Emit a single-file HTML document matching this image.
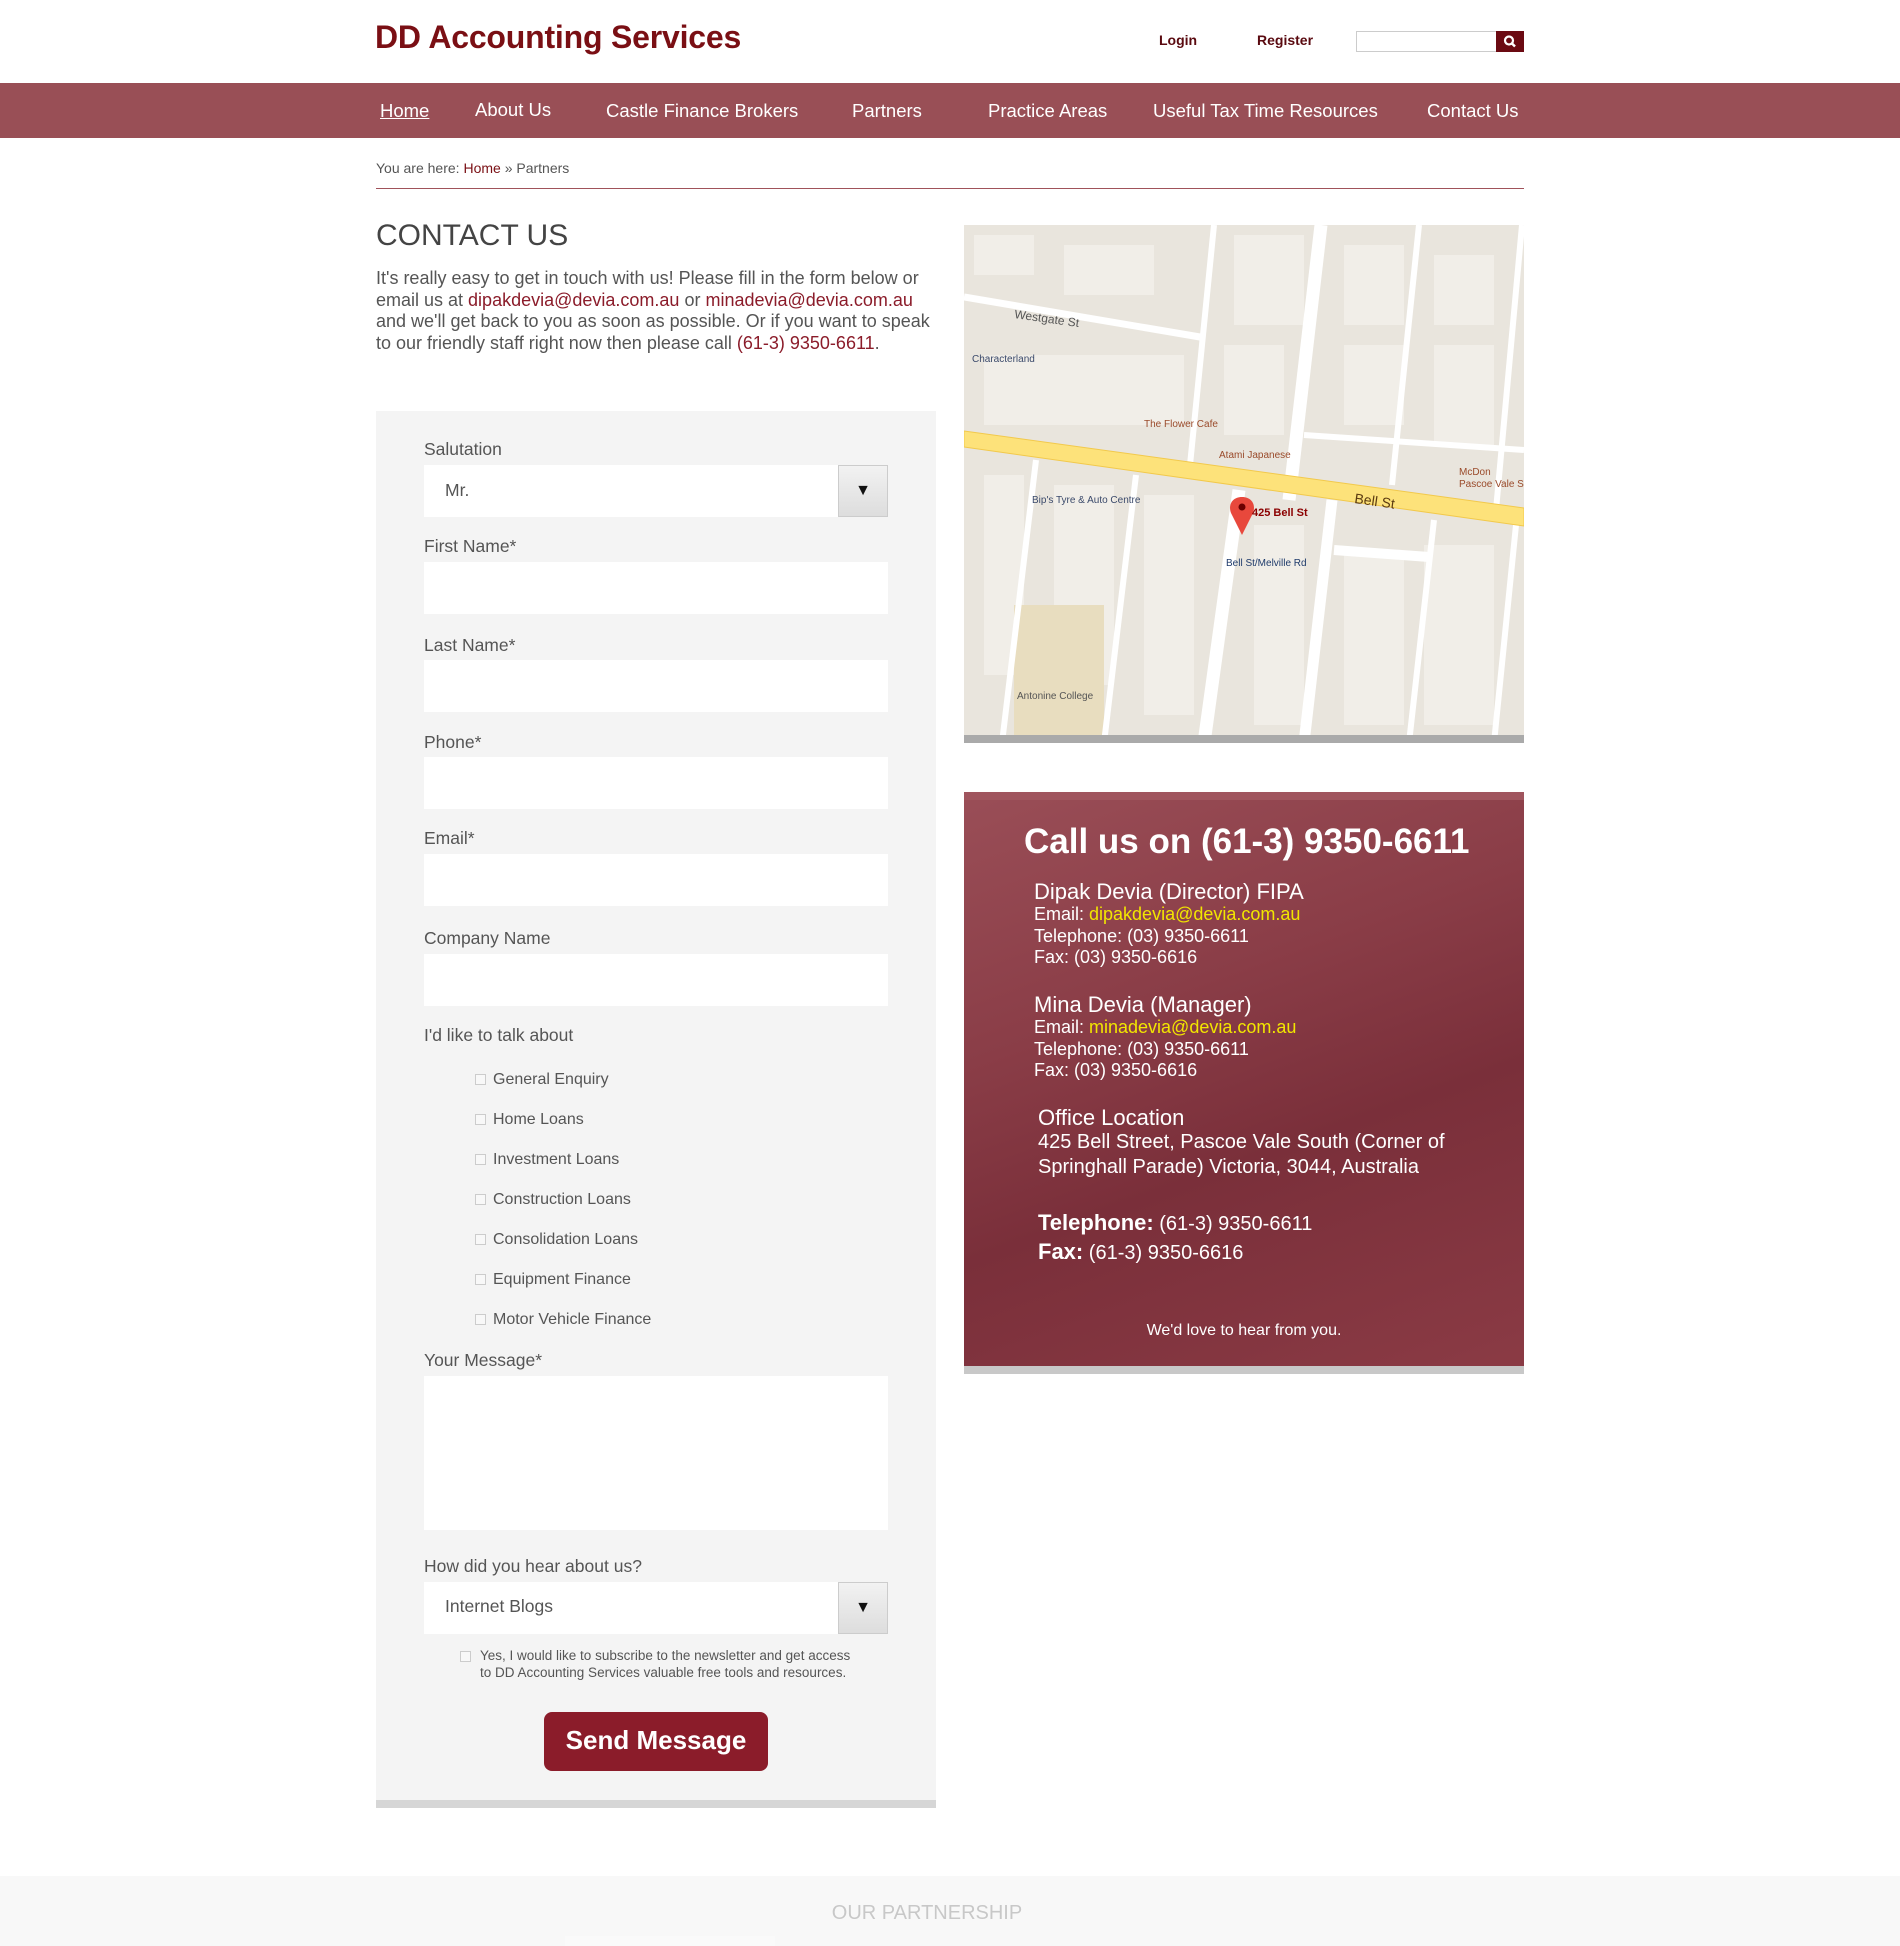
<!DOCTYPE html>
<html><head><meta charset="utf-8"><style>
*{margin:0;padding:0;box-sizing:border-box}
body{width:1900px;height:1946px;position:relative;background:#fff;font-family:"Liberation Sans",sans-serif;color:#555;overflow:hidden}
.a{position:absolute;white-space:nowrap}
.nav span{position:absolute;top:98px;font-size:18.5px;color:#fff;line-height:24px}
.lbl{position:absolute;left:424px;font-size:17.5px;color:#555;line-height:22px}
.inp{position:absolute;left:424px;width:464px;height:52px;background:#fff}
.sel .btn{position:absolute;right:0;top:0;width:50px;height:52px;background:linear-gradient(#f2f2f2,#ddd);border:1px solid #ccc;text-align:center;line-height:50px;font-size:16px;color:#111}
.cb{position:absolute;left:475px;width:11px;height:11px;border:1px solid #ccc;background:#f8f8f8}
.ct{position:absolute;left:493px;font-size:16px;color:#555;line-height:20px}
.w{color:#fff;position:absolute;white-space:nowrap}
.y{color:#f2e600}
</style></head><body>
<div class="a" style="left:375px;top:19px;font-size:32px;font-weight:bold;color:#7a0f14;letter-spacing:-0.2px">DD Accounting Services</div>
<div class="a" style="left:1159px;top:32px;font-size:14px;font-weight:bold;color:#5a0a10">Login</div>
<div class="a" style="left:1257px;top:32px;font-size:14px;font-weight:bold;color:#5a0a10">Register</div>
<div class="a" style="left:1356px;top:31px;width:141px;height:21px;border:1px solid #ccc;background:#fff"></div>
<div class="a" style="left:1496px;top:31px;width:28px;height:21px;background:#6b0a12"><svg width="28" height="21"><circle cx="13" cy="9.5" r="4" stroke="#fff" stroke-width="2.2" fill="none"/><line x1="16" y1="12.5" x2="19" y2="15.5" stroke="#fff" stroke-width="2.5"/></svg></div>

<div class="a nav" style="left:0;top:83px;width:1900px;height:55px;background:#994f56">
<span style="left:380px;top:16px;text-decoration:underline">Home</span>
<span style="left:475px;top:15px">About Us</span>
<span style="left:606px;top:16px">Castle Finance Brokers</span>
<span style="left:852px;top:16px">Partners</span>
<span style="left:988px;top:16px">Practice Areas</span>
<span style="left:1153px;top:16px">Useful Tax Time Resources</span>
<span style="left:1427px;top:16px">Contact Us</span>
</div>
<div class="a" style="left:376px;top:160px;font-size:14px;color:#555">You are here: <span style="color:#7a0f14">Home</span> » Partners</div>
<div class="a" style="left:376px;top:188px;width:1148px;height:1px;background:#a0525a"></div>

<div class="a" style="left:376px;top:219px;font-size:30px;color:#444">CONTACT US</div>
<div class="a" style="left:376px;top:268px;font-size:18px;line-height:21.7px;color:#555">It's really easy to get in touch with us! Please fill in the form below or<br>email us at <span style="color:#8b1c2a">dipakdevia@devia.com.au</span> or <span style="color:#8b1c2a">minadevia@devia.com.au</span><br>and we'll get back to you as soon as possible. Or if you want to speak<br>to our friendly staff right now then please call <span style="color:#8b1c2a">(61-3) 9350-6611</span>.</div>

<div class="a" style="left:376px;top:411px;width:560px;height:1396px;background:#f4f4f4"></div>
<div class="a" style="left:376px;top:1800px;width:560px;height:8px;background:#d6d6d6"></div>

<div class="lbl" style="top:438px">Salutation</div>
<div class="inp sel" style="top:465px"><span class="a" style="left:21px;top:15px;font-size:17.5px;color:#555">Mr.</span><div class="btn">▼</div></div>
<div class="lbl" style="top:535px">First Name*</div>
<div class="inp" style="top:562px"></div>
<div class="lbl" style="top:634px">Last Name*</div>
<div class="inp" style="top:660px"></div>
<div class="lbl" style="top:731px">Phone*</div>
<div class="inp" style="top:757px"></div>
<div class="lbl" style="top:827px">Email*</div>
<div class="inp" style="top:854px"></div>
<div class="lbl" style="top:927px">Company Name</div>
<div class="inp" style="top:954px"></div>
<div class="lbl" style="top:1024px">I'd like to talk about</div>
<div class="cb" style="top:1074px"></div><div class="ct" style="top:1070px">General Enquiry</div>
<div class="cb" style="top:1114px"></div><div class="ct" style="top:1110px">Home Loans</div>
<div class="cb" style="top:1154px"></div><div class="ct" style="top:1150px">Investment Loans</div>
<div class="cb" style="top:1194px"></div><div class="ct" style="top:1190px">Construction Loans</div>
<div class="cb" style="top:1234px"></div><div class="ct" style="top:1230px">Consolidation Loans</div>
<div class="cb" style="top:1274px"></div><div class="ct" style="top:1270px">Equipment Finance</div>
<div class="cb" style="top:1314px"></div><div class="ct" style="top:1310px">Motor Vehicle Finance</div>
<div class="lbl" style="top:1349px">Your Message*</div>
<div class="inp" style="top:1376px;height:154px"></div>
<div class="lbl" style="top:1555px">How did you hear about us?</div>
<div class="inp sel" style="top:1582px"><span class="a" style="left:21px;top:14px;font-size:17.5px;color:#555">Internet Blogs</span><div class="btn">▼</div></div>
<div class="cb" style="left:460px;top:1651px"></div>
<div class="a" style="left:480px;top:1647px;font-size:13.5px;line-height:17px;color:#555">Yes, I would like to subscribe to the newsletter and get access<br>to DD Accounting Services valuable free tools and resources.</div>
<div class="a" style="left:544px;top:1712px;width:224px;height:59px;background:#8b1c2a;border-radius:8px;color:#fff;font-size:26px;font-weight:bold;text-align:center;line-height:57px">Send Message</div>

<!-- map -->
<div class="a" style="left:964px;top:225px;width:560px;height:518px;background:#e9e5dd;overflow:hidden">
<svg width="560" height="518" style="position:absolute;left:0;top:0">
<g fill="#f1eee8">
<rect x="10" y="10" width="60" height="40"/><rect x="100" y="20" width="90" height="50"/><rect x="270" y="10" width="70" height="90"/><rect x="380" y="20" width="60" height="80"/><rect x="470" y="30" width="60" height="70"/><rect x="20" y="130" width="200" height="70"/><rect x="260" y="120" width="60" height="90"/><rect x="380" y="120" width="60" height="80"/><rect x="470" y="120" width="60" height="100"/><rect x="20" y="250" width="40" height="200"/><rect x="90" y="260" width="60" height="200"/><rect x="180" y="270" width="50" height="220"/><rect x="290" y="300" width="50" height="200"/><rect x="380" y="330" width="60" height="170"/><rect x="460" y="320" width="70" height="180"/>
</g>
<rect x="50" y="380" width="90" height="130" fill="#e8ddbf"/>
<g stroke="#fff" fill="none">
<line x1="0" y1="72" x2="236" y2="112" stroke-width="7"/>
<line x1="250" y1="0" x2="225" y2="250" stroke-width="6"/>
<line x1="357" y1="0" x2="325" y2="275" stroke-width="13"/>
<line x1="275" y1="265" x2="240" y2="518" stroke-width="13"/>
<line x1="368" y1="275" x2="340" y2="518" stroke-width="11"/>
<line x1="455" y1="0" x2="428" y2="260" stroke-width="6"/>
<line x1="558" y1="0" x2="532" y2="285" stroke-width="6"/>
<line x1="72" y1="235" x2="38" y2="518" stroke-width="6"/>
<line x1="172" y1="250" x2="140" y2="518" stroke-width="6"/>
<line x1="470" y1="295" x2="445" y2="518" stroke-width="6"/>
<line x1="552" y1="300" x2="530" y2="518" stroke-width="6"/>
<line x1="370" y1="325" x2="465" y2="332" stroke-width="10"/>
<line x1="340" y1="210" x2="560" y2="225" stroke-width="6"/>
</g>
<path d="M0 206 L560 283 L560 301 L0 222 Z" fill="#fde27a" stroke="#f2c94c" stroke-width="1"/>
<path d="M278 272 c-10 0 -14 8 -11 16 l11 22 l11 -22 c3 -8 -1 -16 -11 -16z" fill="#e8483c"/>
<circle cx="278" cy="282" r="3.5" fill="#6b0000"/>
<g font-family="Liberation Sans,sans-serif" font-size="10">
<text x="50" y="93" fill="#555" transform="rotate(8 50 93)" font-size="12">Westgate St</text>
<text x="8" y="137" fill="#3b4a6b">Characterland</text>
<text x="180" y="202" fill="#9a4a2a">The Flower Cafe</text>
<text x="255" y="233" fill="#9a4a2a">Atami Japanese</text>
<text x="68" y="278" fill="#3b4a6b">Bip's Tyre &amp; Auto Centre</text>
<text x="288" y="291" fill="#8b0000" font-weight="bold" font-size="11">425 Bell St</text>
<text x="390" y="278" fill="#5a3a10" font-size="14" transform="rotate(8 390 278)">Bell St</text>
<text x="262" y="341" fill="#1f3b6b">Bell St/Melville Rd</text>
<text x="53" y="474" fill="#555">Antonine College</text>
<text x="495" y="250" fill="#9a4a2a">McDon</text>
<text x="495" y="262" fill="#9a4a2a">Pascoe Vale S</text>
</g>
</svg>
<div style="position:absolute;left:0;bottom:0;width:560px;height:8px;background:#aaa"></div>
</div>

<!-- contact box -->
<div class="a" style="left:964px;top:792px;width:560px;height:582px;background:linear-gradient(160deg,#9a4e57 0%,#8a3d47 35%,#7a2f3a 60%,#8b3b45 100%)">
<div style="position:absolute;left:0;top:0;width:560px;height:8px;background:#a0555e"></div>
<div style="position:absolute;left:0;bottom:0;width:560px;height:8px;background:#c8c8c8"></div>
<div class="w" style="left:60px;top:30px;font-size:35px;font-weight:bold">Call us on (61-3) 9350-6611</div>
<div class="w" style="left:70px;top:87px;font-size:22px">Dipak Devia (Director) FIPA</div>
<div class="w" style="left:70px;top:112px;font-size:18px;line-height:21.7px">Email: <span class="y">dipakdevia@devia.com.au</span><br>Telephone: (03) 9350-6611<br>Fax: (03) 9350-6616</div>
<div class="w" style="left:70px;top:200px;font-size:22px">Mina Devia (Manager)</div>
<div class="w" style="left:70px;top:225px;font-size:18px;line-height:21.7px">Email: <span class="y">minadevia@devia.com.au</span><br>Telephone: (03) 9350-6611<br>Fax: (03) 9350-6616</div>
<div class="w" style="left:74px;top:313px;font-size:22px">Office Location</div>
<div class="w" style="left:74px;top:338px;font-size:20px;line-height:24.5px">425 Bell Street, Pascoe Vale South (Corner of<br>Springhall Parade) Victoria, 3044, Australia</div>
<div class="w" style="left:74px;top:417px;font-size:20px;line-height:27px"><b style="font-size:22px">Telephone:</b> (61-3) 9350-6611<br><b style="font-size:22px">Fax:</b> (61-3) 9350-6616</div>
<div class="w" style="left:0;width:560px;text-align:center;top:530px;font-size:16px">We'd love to hear from you.</div>
</div>

<div class="a" style="left:0;top:1876px;width:1900px;height:70px;background:#f8f8f8"></div>
<div class="a" style="left:827px;width:200px;text-align:center;top:1902px;font-size:20px;color:#c8c8c8">OUR PARTNERSHIP</div>
<div class="a" style="left:565px;top:1936px;width:210px;height:10px;background:#fafafa"></div>
</body></html>
